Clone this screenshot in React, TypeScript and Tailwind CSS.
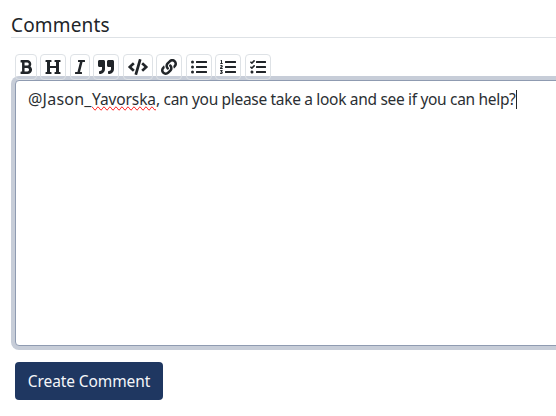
import type { ReactNode } from "react";
import {
  FaBold,
  FaCode,
  FaHeading,
  FaItalic,
  FaLink,
  FaListOl,
  FaListUl,
  FaQuoteRight,
  FaTasks,
} from "react-icons/fa";

function ToolButton({ label, children }: { label: string; children: ReactNode }) {
  return (
    <button
      type="button"
      aria-label={label}
      className="flex h-[26px] shrink-0 items-center rounded border border-[#dee2e6] px-1"
    >
      {children}
    </button>
  );
}

export default function App() {
  return (
    <main className="h-[416px] w-[556px] overflow-hidden bg-white pl-[11px] font-['Noto_Sans',sans-serif] text-[#212529]">
      <h2 className="h-[38px] border-b border-[#dee2e6] pt-[11px] text-[19px] leading-[28px] tracking-[0.15px]">
        Comments
      </h2>
      <div className="relative z-10 mt-4 ml-1 flex h-[26px] gap-[3.45px]">
        <ToolButton label="Bold"><FaBold className="h-4 w-3" /></ToolButton>
        <ToolButton label="Heading"><FaHeading className="h-4 w-4" /></ToolButton>
        <ToolButton label="Italic"><FaItalic className="h-4 w-2.5" /></ToolButton>
        <ToolButton label="Quote"><FaQuoteRight className="h-4 w-4" /></ToolButton>
        <ToolButton label="Code"><FaCode className="h-4 w-5" /></ToolButton>
        <ToolButton label="Link"><FaLink className="h-4 w-4" /></ToolButton>
        <ToolButton label="Bulleted list"><FaListUl className="h-4 w-4" /></ToolButton>
        <ToolButton label="Numbered list"><FaListOl className="h-4 w-4" /></ToolButton>
        <ToolButton label="Task list"><FaTasks className="h-4 w-4" /></ToolButton>
      </div>
      <div className="ml-1 h-[266px] w-[600px] rounded border border-[#8f9bb1] bg-white px-3 pt-[6px] text-[15.5px] leading-6 text-[#2b2f33] shadow-[0_0_0_4px_#c7cdd8]">
        <div className="flex whitespace-pre">
          <span className="w-[64px] text-[16px] tracking-[0.22px]">@Jason_</span>
          <span className="w-[64px] tracking-[-0.1px] [text-decoration-line:spelling-error]">
            Yavorska
          </span>
          <span className="w-[360px] tracking-[-0.32px]">, can you please take a look and see if you can help?</span>
          <span className="mt-[3px] h-[19px] w-px bg-[#212529]" />
        </div>
      </div>
      <button
        type="button"
        className="mt-4 ml-1 flex h-[38px] w-[148px] items-center justify-center rounded bg-[#1f3761] pt-0.5 text-[15.5px] tracking-[-0.1px] whitespace-nowrap text-[#f4f6f9]"
      >
        Create Comment
      </button>
    </main>
  );
}
